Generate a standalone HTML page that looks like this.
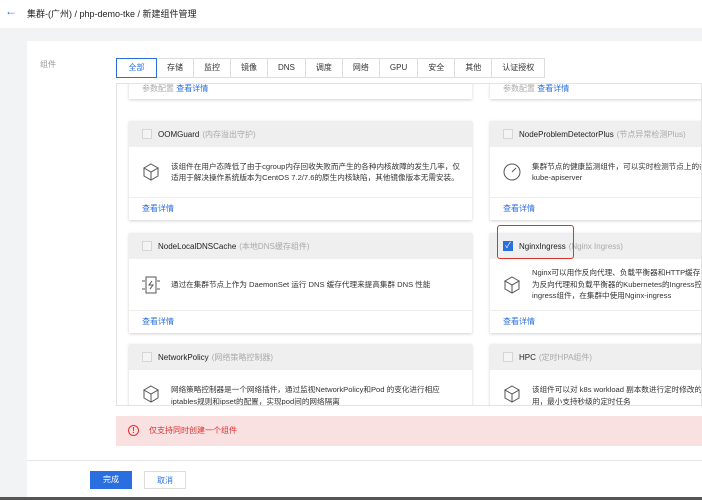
<!DOCTYPE html>
<html><head><meta charset="utf-8"><style>
*{box-sizing:border-box;margin:0;padding:0}
body{width:702px;height:500px;overflow:hidden;background:#f2f3f5;font-family:"Liberation Sans","Noto Sans CJK SC",sans-serif;font-size:8px;color:#222;position:relative}
.a{position:absolute}
.hdr{left:0;top:0;width:702px;height:28px;background:#fff}
.panel{left:27px;top:41px;width:675px;height:457px;background:#fff}
.tabs{left:116px;top:58px;display:flex;border:1px solid #ddd;height:20px}
.tabs div{height:18px;line-height:18px;padding:0 10px;border-right:1px solid #ddd;font-size:8px;color:#333;text-align:center}
.tabs div.on{border:1px solid #2a6fe0;color:#2a6fe0;margin:-1px 0 -1px -1px;height:20px;line-height:18px;width:41px}
.scroll{left:116px;top:83px;width:586px;height:323px;border:1px solid #e3e3e3;overflow:hidden;background:#fff}
.card{position:absolute;width:343px;background:#fff;box-shadow:0 1px 3px rgba(0,0,0,.18);overflow:hidden}
.ch{height:26px;background:#efefef;display:flex;align-items:center;padding-left:13px;font-size:8px;color:#222}
.cb{width:10px;height:10px;border:1px solid #d5d5d5;background:#f4f4f4;margin-right:6px}
.sub{color:#aaa;margin-left:3px}
.body{display:flex;align-items:center;padding:0 12px;border-bottom:1px solid #eee;font-size:7.6px;line-height:11.5px;color:#333;white-space:nowrap}
.ic{width:20px;height:20px;margin-right:10px;flex:none}
.lk{color:#2a6fe0;font-size:8px;padding-left:13px;height:22px;line-height:22px}
.err{left:116px;top:416px;width:586px;height:30px;background:#f9e0e1;color:#d33;font-size:8px;line-height:30px;padding-left:33px}
.foot{left:27px;top:460px;width:675px;border-top:1px solid #e5e5e5}
.btn{top:471px;height:18px;line-height:18px;text-align:center;font-size:8px}
</style></head><body>
<div class="a hdr"></div>
<div class="a" style="left:5px;top:4px;font-size:12px;color:#2a6fe0">←</div>
<div class="a" style="left:27px;top:7px;font-size:9px;color:#222">集群-(广州) / php-demo-tke / 新建组件管理</div>
<div class="a panel"></div>
<div class="a" style="left:40px;top:59px;color:#999;font-size:8px">组件</div>
<div class="a tabs"><div class="on">全部</div><div>存储</div><div>监控</div><div>镜像</div><div>DNS</div><div>调度</div><div>网络</div><div>GPU</div><div>安全</div><div>其他</div><div style="border-right:none">认证授权</div></div>
<div class="a scroll">
 <div class="card" style="left:12px;top:-10px;height:25px"><div style="position:absolute;left:13px;top:9px;color:#aaa">参数配置 <span style="color:#2a6fe0">查看详情</span></div></div>
 <div class="card" style="left:373px;top:-10px;height:25px"><div style="position:absolute;left:13px;top:9px;color:#aaa">参数配置 <span style="color:#2a6fe0">查看详情</span></div></div>

 <div class="card" style="left:12px;top:37px"><div class="ch"><div class="cb"></div>OOMGuard<span class="sub">(内存溢出守护)</span></div>
  <div class="body" style="height:51px"><svg class="ic" viewBox="0 0 20 20" fill="none" stroke="#555" stroke-width="1"><path d="M10 2l7 4-7 4-7-4z M3 6v8l7 4 7-4V6 M10 10v8"/></svg><div>该组件在用户态降低了由于cgroup内存回收失败而产生的各种内核故障的发生几率，仅<br>适用于解决操作系统版本为CentOS 7.2/7.6的原生内核缺陷，其他镜像版本无需安装。</div></div>
  <div class="lk">查看详情</div></div>
 <div class="card" style="left:373px;top:37px"><div class="ch"><div class="cb"></div>NodeProblemDetectorPlus<span class="sub">(节点异常检测Plus)</span></div>
  <div class="body" style="height:51px"><svg class="ic" viewBox="0 0 20 20" fill="none" stroke="#555" stroke-width="1"><circle cx="10" cy="10" r="8"/><path d="M10 10l4-4"/></svg><div>集群节点的健康监测组件，可以实时检测节点上的各种问题<br>kube-apiserver</div></div>
  <div class="lk">查看详情</div></div>

 <div class="card" style="left:12px;top:149px"><div class="ch"><div class="cb"></div>NodeLocalDNSCache<span class="sub">(本地DNS缓存组件)</span></div>
  <div class="body" style="height:52px"><svg class="ic" viewBox="0 0 20 20" fill="none" stroke="#555" stroke-width="1"><rect x="5" y="2" width="10" height="16"/><path d="M11 6l-3 4h4l-3 4 M1 6h3 M1 14h3 M16 6h3 M16 14h3"/></svg><div>通过在集群节点上作为 DaemonSet 运行 DNS 缓存代理来提高集群 DNS 性能</div></div>
  <div class="lk">查看详情</div></div>
 <div class="card" style="left:373px;top:149px"><div class="ch"><div class="cb" style="background:#2a6fe0;border-color:#2a6fe0;color:#fff;font-size:8px;line-height:8px;text-align:center">✓</div>NginxIngress<span class="sub">(Nginx Ingress)</span></div>
  <div class="body" style="height:52px"><svg class="ic" viewBox="0 0 20 20" fill="none" stroke="#555" stroke-width="1"><path d="M10 2l7 4-7 4-7-4z M3 6v8l7 4 7-4V6 M10 10v8"/></svg><div>Nginx可以用作反向代理、负载平衡器和HTTP缓存，<br>为反向代理和负载平衡器的Kubernetes的Ingress控制器<br>ingress组件，在集群中使用Nginx-ingress</div></div>
  <div class="lk">查看详情</div></div>

 <div class="card" style="left:12px;top:260px;height:80px"><div class="ch"><div class="cb"></div>NetworkPolicy<span class="sub">(网络策略控制器)</span></div>
  <div class="body" style="height:40px;align-items:flex-start;padding-top:14px;border:none"><svg class="ic" viewBox="0 0 20 20" fill="none" stroke="#555" stroke-width="1"><path d="M10 2l7 4-7 4-7-4z M3 6v8l7 4 7-4V6 M10 10v8"/></svg><div>网络策略控制器是一个网络插件，通过监视NetworkPolicy和Pod 的变化进行相应<br>iptables规则和ipset的配置，实现pod间的网络隔离</div></div></div>
 <div class="card" style="left:373px;top:260px;height:80px"><div class="ch"><div class="cb"></div>HPC<span class="sub">(定时HPA组件)</span></div>
  <div class="body" style="height:40px;align-items:flex-start;padding-top:14px;border:none"><svg class="ic" viewBox="0 0 20 20" fill="none" stroke="#555" stroke-width="1"><path d="M10 2l7 4-7 4-7-4z M3 6v8l7 4 7-4V6 M10 10v8"/></svg><div>该组件可以对 k8s workload 副本数进行定时修改的<br>用，最小支持秒级的定时任务</div></div></div>
</div>
<div class="a" style="left:497px;top:225px;width:77px;height:34px;border:1.5px solid #e0322b;border-radius:3px"></div>
<div class="a err">仅支持同时创建一个组件</div>
<div class="a" style="left:128px;top:425px;width:11px;height:11px;border:1.2px solid #d33;border-radius:50%;color:#d33;font-size:8px;line-height:9px;text-align:center;font-weight:bold">!</div>
<div class="a foot"></div>
<div class="a btn" style="left:90px;width:42px;background:#2a6fe0;color:#fff">完成</div>
<div class="a btn" style="left:144px;width:42px;border:1px solid #ddd;color:#2a6fe0;background:#fff">取消</div>
<div class="a" style="left:0;top:497px;width:702px;height:3px;background:#555"></div>
</body></html>
